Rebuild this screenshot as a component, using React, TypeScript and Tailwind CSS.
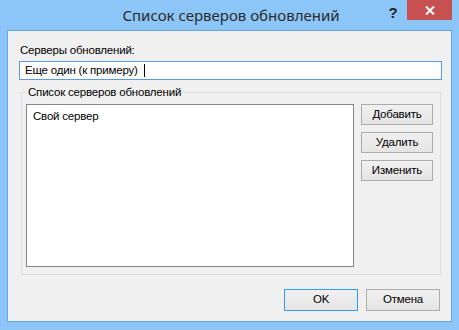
import { useState } from "react";

// Диалог в стиле Windows 8: список серверов обновлений
const FONT = { fontFamily: '"Liberation Sans", "Noto Sans", sans-serif' };

function WinButton({ label, primary = false, className = "" }: { label: string; primary?: boolean; className?: string }) {
  return (
    <button
      className={`flex items-center justify-center border text-[11.5px] tracking-[-0.2px] leading-none text-black bg-gradient-to-b from-[#f0f0f0] to-[#e5e5e5] ${
        primary ? "border-[#3399ff]" : "border-[#acacac]"
      } ${className}`}
    >
      {label}
    </button>
  );
}

export default function App() {
  const [value] = useState("Еще один (к примеру)");
  const servers = ["Свой сервер"];

  return (
    <div className="w-[459px] h-[330px] bg-[#8cc6f8] flex flex-col overflow-hidden" style={FONT}>
      {/* заголовок окна */}
      <div className="h-[30px] flex items-start shrink-0">
        <div
          className="flex-1 h-[30px] flex items-center justify-center pl-[76px] text-[15px] text-[#2b2b2b]"
          style={{ fontFamily: '"Noto Sans", sans-serif' }}
        >
          Список серверов обновлений
        </div>
        <div className="w-[14px] h-[26px] flex items-center justify-center text-[15px] font-bold text-[#222] mr-[7px]">?</div>
        <div className="w-[45px] h-[20px] bg-[#c75050] flex items-center justify-center mr-[7px]">
          <svg width="10" height="9" viewBox="0 0 10 9">
            <path d="M1 0.5 L9 8.5 M9 0.5 L1 8.5" stroke="#fff" strokeWidth="2" />
          </svg>
        </div>
      </div>

      {/* клиентская область */}
      <div className="mx-[7px] h-[292px] border border-[#6aa6dc] bg-[#f0f0f0] flex flex-col text-[11.5px] tracking-[-0.2px]">
        <div className="ml-[12px] mt-[11px] leading-[16px] text-black">Серверы обновлений:</div>

        <div className="ml-[11px] mt-[3px] w-[423px] h-[19px] border border-[#569de5] bg-white flex items-center pl-[5px] text-black">
          <span>{value}</span>
          <span className="ml-[6px] w-px h-[13px] bg-black" />
        </div>

        <fieldset className="ml-[13px] mt-[4px] w-[420px] border border-[#dcdcdc]">
          <legend className="ml-[4px] px-[2px] leading-[16px] text-black">Список серверов обновлений</legend>
          <div className="flex px-[4px] pt-[4px] pb-[7px]">
            <div className="w-[328px] h-[163px] border border-[#828790] bg-white pl-[6px] pt-[3px] leading-[16px] text-black">
              {servers.map((s) => (
                <div key={s}>{s}</div>
              ))}
            </div>
            <div className="ml-[7px] flex flex-col gap-[7px]">
              <WinButton label="Добавить" className="w-[72px] h-[21px]" />
              <WinButton label="Удалить" className="w-[72px] h-[21px]" />
              <WinButton label="Изменить" className="w-[72px] h-[21px]" />
            </div>
          </div>
        </fieldset>

        <div className="ml-[276px] mt-[14px] flex gap-[8px]">
          <WinButton label="OK" primary className="w-[74px] h-[22px]" />
          <WinButton label="Отмена" className="w-[74px] h-[22px]" />
        </div>
      </div>
    </div>
  );
}
